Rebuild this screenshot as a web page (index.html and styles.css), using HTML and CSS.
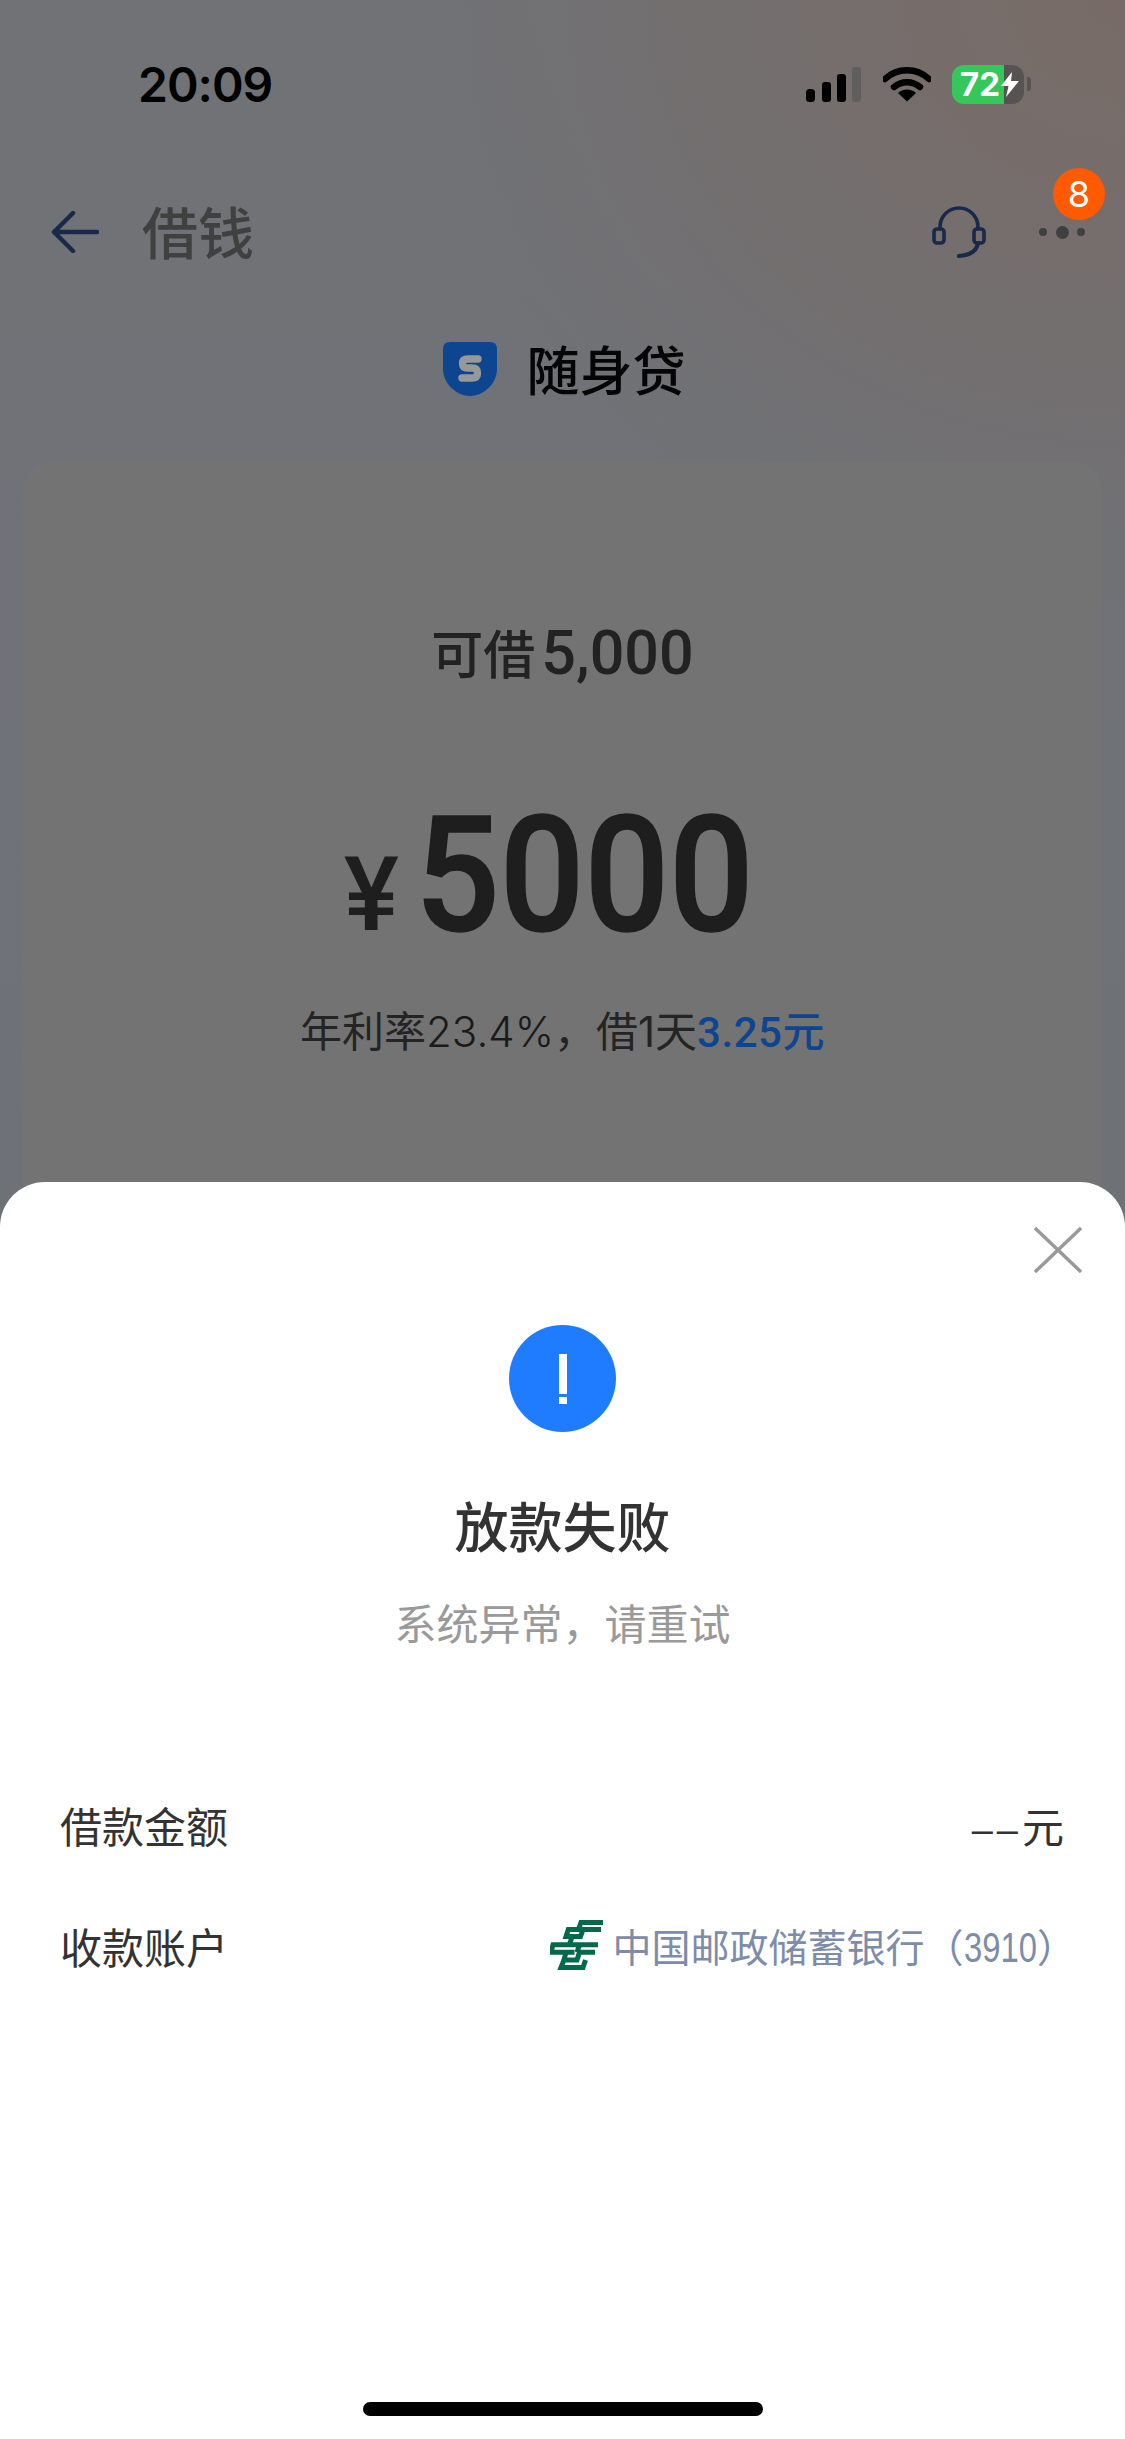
FILE: index.html
```html
<!DOCTYPE html>
<html lang="zh-CN">
<head>
<meta charset="utf-8">
<title>借钱</title>
<link rel="stylesheet" href="styles.css">
</head>
<body>
<main class="screen">
  <header class="status">
    <span class="clock">20:09</span>
    <div class="status-icons">
      <svg class="signal" width="55" height="35" viewBox="0 0 55 35">
        <rect x="0" y="22" width="9" height="13" rx="3.5" fill="#000"/>
        <rect x="16" y="15" width="9" height="20" rx="3" fill="#000"/>
        <rect x="31" y="7" width="9" height="28" rx="3" fill="#000"/>
        <rect x="46" y="0" width="9" height="35" rx="3" fill="#615f5e"/>
      </svg>
      <svg class="wifi" width="48" height="36" viewBox="0 0 48 36">
        <path d="M2 13 A32 32 0 0 1 46 13" fill="none" stroke="#000" stroke-width="6.5" stroke-linecap="round"/>
        <path d="M11 21 A20 20 0 0 1 37 21" fill="none" stroke="#000" stroke-width="6.5" stroke-linecap="round"/>
        <path d="M24 35.5 L15 27 A13 13 0 0 1 33 27 Z" fill="#000"/>
      </svg>
      <div class="battery">
        <div class="battery-body">
          <span class="battery-level">72</span>
          <svg class="bolt" width="18" height="25" viewBox="0 0 18 25"><path d="M11 0 L0 14 L7.5 14 L5 25 L18 9 L10 9 Z" fill="#fff"/></svg>
        </div>
        <span class="battery-nub"></span>
      </div>
    </div>
  </header>

  <nav class="topbar">
    <svg class="back" width="48" height="42" viewBox="0 0 48 42">
      <path d="M22 2 L3 21 L22 40 M3 21 H46" fill="none" stroke="#18294a" stroke-width="4.5" stroke-linecap="round" stroke-linejoin="round"/>
    </svg>
    <h1 class="page-title">借钱</h1>
    <svg class="headset" width="54" height="54" viewBox="0 0 54 54">
      <path d="M8 24 V22 A19 19 0 0 1 46 22 V24" fill="none" stroke="#18294a" stroke-width="3.6"/>
      <rect x="2" y="24" width="10" height="14" rx="3" fill="none" stroke="#18294a" stroke-width="3.6"/>
      <rect x="42" y="24" width="10" height="14" rx="3" fill="none" stroke="#18294a" stroke-width="3.6"/>
      <path d="M46 38 C45 46 38 50 27 51" fill="none" stroke="#18294a" stroke-width="4.2" stroke-linecap="round"/>
    </svg>
    <div class="more">
      <span class="dot"></span><span class="dot dot-mid"></span><span class="dot"></span>
      <span class="badge">8</span>
    </div>
  </nav>

  <div class="product">
    <svg class="shield" width="54" height="54" viewBox="0 0 54 54">
      <path d="M7 0 H47 Q54 0 54 7 V27 C54 42 40 54 27 54 C14 54 0 42 0 27 V7 Q0 0 7 0 Z" fill="#0e4590"/>
      <path d="M35 17 H25 Q19.5 17 19.5 21.5 Q19.5 26 25 26 H29 Q34.5 26 34.5 31 Q34.5 36 29 36 H19" fill="none" stroke="#96989a" stroke-width="7.4" stroke-linecap="round"/>
    </svg>
    <span class="product-name">随身贷</span>
  </div>

  <section class="loan-card">
    <p class="limit">可借<span class="limit-num">5,000</span></p>
    <p class="amount"><span class="yen">¥</span><span class="amount-num">5000</span></p>
    <p class="rate">年利率<span class="rate-light">23.4%</span>，借1天<span class="rate-cost">3.25元</span></p>
  </section>

  <section class="sheet">
    <svg class="close" width="48" height="46" viewBox="0 0 48 46">
      <path d="M1 1 L47 45 M47 1 L1 45" fill="none" stroke="#999" stroke-width="3.4"/>
    </svg>
    <div class="alert-icon"><span class="alert-bar"></span><span class="alert-dot"></span></div>
    <h2 class="result-title">放款失败</h2>
    <p class="result-sub">系统异常，请重试</p>
    <dl class="details">
      <div class="detail-row">
        <dt>借款金额</dt>
        <dd><span class="dashes">––</span>元</dd>
      </div>
      <div class="detail-row">
        <dt>收款账户</dt>
        <dd class="bank">
          <svg class="bank-logo" width="53" height="50" viewBox="0 0 53 50">
            <g fill="none" stroke="#04684a" stroke-width="5">
              <path d="M53 2.5H31L28.4 9.5H18.3L16 16.5H30.5L33 9.5H51"/>
              <path d="M22 16.5L19.6 24.8"/>
              <path d="M48 24.8H3L1 32.2H24.5"/>
              <path d="M45 32.2H29.5L27 40H14L11 47.5H33L35.5 40"/>
              <path d="M29.5 24.8L27 32.2M16 32.2L14 40"/>
            </g>
          </svg>
          <span class="bank-name">中国邮政储蓄银行（<span class="bank-tail">3910</span>）</span>
        </dd>
      </div>
    </dl>
    <span class="home-bar"></span>
  </section>
</main>
</body>
</html>
```

FILE: styles.css
```css
* { box-sizing: border-box; margin: 0; padding: 0; }

html, body { width: 1125px; height: 2439px; overflow: hidden; }

body {
  font-family: "Liberation Sans", "Noto Sans CJK SC", sans-serif;
}

.screen {
  position: relative;
  width: 1125px;
  height: 2439px;
  display: flex;
  flex-direction: column;
  background:
    radial-gradient(720px 620px at 100% 0, #786b66 0%, rgba(112, 114, 118, 0) 100%),
    linear-gradient(180deg, #707276 0%, #6c7177 100%);
  overflow: hidden;
}

/* Status bar */
.status {
  height: 64px;
  margin-top: 52px;
  padding: 0 94px 0 138px;
  display: flex;
  justify-content: space-between;
  align-items: center;
}
.clock {
  font-family: Inter, "Liberation Sans", sans-serif;
  font-size: 48px;
  font-weight: 600;
  letter-spacing: -1px;
  color: #000;
}
.status-icons { display: flex; align-items: center; }
.signal { margin-right: 22px; }
.wifi { margin-right: 21px; }
.battery { display: flex; align-items: center; gap: 3px; }
.battery-body {
  position: relative;
  width: 72px;
  height: 39px;
  border-radius: 12px;
  background: linear-gradient(90deg, #35c759 0 72%, #575352 72% 100%);
  display: flex;
  align-items: center;
}
.battery-level {
  margin-left: 8px;
  font-family: Inter, "Liberation Sans", sans-serif;
  font-size: 33px;
  font-weight: 700;
  color: #fff;
}
.bolt { margin-left: 1px; }
.battery-nub {
  width: 4px;
  height: 14px;
  border-radius: 0 3px 3px 0;
  background: #575352;
}

/* Top navigation */
.topbar {
  height: 100px;
  margin-top: 66px;
  padding-left: 51px;
  display: flex;
  align-items: center;
}
.page-title {
  margin-left: 43px;
  margin-bottom: 5px;
  font-family: "Noto Sans CJK SC", sans-serif;
  font-size: 56px;
  font-weight: 500;
  color: #404040;
  flex: 1;
}
.headset { margin-right: 53px; }
.more {
  position: relative;
  width: 46px;
  margin-right: 40px;
  display: flex;
  align-items: center;
  justify-content: space-between;
}
.dot { width: 8px; height: 8px; border-radius: 50%; background: #3f3f3f; }
.dot-mid { width: 13px; height: 13px; }
.badge {
  position: absolute;
  left: 14px;
  top: -58px;
  width: 52px;
  height: 52px;
  border-radius: 50%;
  background: #ff5a00;
  color: #fff;
  font-size: 36px;
  line-height: 52px;
  text-align: center;
  font-family: Inter, "Liberation Sans", sans-serif;
}

/* Product heading */
.product {
  margin-top: 60px;
  display: flex;
  justify-content: center;
  align-items: center;
  gap: 30px;
  height: 54px;
  padding-left: 3px;
}
.product-name {
  margin-bottom: 3px;
  font-family: "Noto Sans CJK SC", sans-serif;
  font-size: 53px;
  font-weight: 500;
  color: #050505;
}

/* Loan card */
.loan-card {
  margin: 65px 23px 0;
  height: 1000px;
  border-radius: 30px;
  background: #737373;
  display: flex;
  flex-direction: column;
  align-items: center;
  color: #1f1f1f;
}
.limit {
  margin-top: 154px;
  font-family: "Noto Sans CJK SC", sans-serif;
  font-size: 52px;
  font-weight: 500;
  line-height: 74px;
  color: #222;
}
.limit-num {
  margin-left: 6px;
  font-family: Roboto, sans-serif;
  font-size: 61px;
  font-weight: 500;
}
.amount {
  margin-top: 90px;
  padding-right: 27px;
  display: flex;
  align-items: baseline;
  line-height: 190px;
  font-family: Roboto, sans-serif;
  font-weight: 500;
  color: #1e1e1e;
}
.yen { font-size: 104px; margin-right: 16px; }
.amount-num {
  font-size: 162px;
  display: inline-block;
  -webkit-text-stroke: 1.5px #1e1e1e;
  transform: scaleX(0.92);
  transform-origin: left center;
  margin-right: -29px;
}
.rate {
  margin-top: 14px;
  font-family: Inter, "Noto Sans CJK SC", sans-serif;
  font-size: 42px;
  line-height: 56px;
  color: #242424;
}
.rate-light { font-weight: 300; color: #1a1a1a; }
.rate-cost {
  font-family: Roboto, "Noto Sans CJK SC", sans-serif;
  letter-spacing: 0.5px;
  color: #0e4590;
  font-weight: 500;
}

/* Result sheet */
.sheet {
  position: absolute;
  left: 0;
  right: 0;
  top: 1182px;
  bottom: 0;
  border-radius: 45px 45px 0 0;
  background: #fff;
  display: flex;
  flex-direction: column;
  align-items: center;
}
.close {
  position: absolute;
  top: 45px;
  right: 43px;
}
.alert-icon {
  margin-top: 143px;
  width: 107px;
  height: 107px;
  border-radius: 50%;
  background: #1f7cff;
  display: flex;
  flex-direction: column;
  align-items: center;
  padding-top: 29px;
  gap: 3px;
}
.alert-bar { width: 8px; height: 40px; background: #fff; }
.alert-dot { width: 8px; height: 7px; background: #fff; }
.result-title {
  margin-top: 55px;
  font-family: "Noto Sans CJK SC", sans-serif;
  font-size: 54px;
  font-weight: 500;
  line-height: 76px;
  color: #333;
}
.result-sub {
  margin-top: 29px;
  font-family: "Noto Sans CJK SC", sans-serif;
  font-size: 42px;
  line-height: 60px;
  color: #999;
}
.details {
  align-self: stretch;
  margin-top: 142px;
  padding: 0 61px 0 60px;
  display: flex;
  flex-direction: column;
  gap: 61px;
}
.detail-row {
  display: flex;
  justify-content: space-between;
  align-items: center;
  height: 60px;
  font-family: "Liberation Sans", "Noto Sans CJK SC", sans-serif;
  font-size: 42px;
  color: #333;
}
.dashes {
  font-size: 38px;
  letter-spacing: 4px;
}
.bank {
  display: flex;
  align-items: center;
  margin-right: -12px;
  font-size: 39px;
  color: #7d8ca8;
}
.bank-logo { margin-right: 10px; }
.bank-tail {
  display: inline-block;
  font-size: 42px;
  transform: scaleX(0.78);
  transform-origin: left center;
  margin-right: -20px;
}
.home-bar {
  position: absolute;
  left: 363px;
  bottom: 23px;
  width: 400px;
  height: 14px;
  border-radius: 7px;
  background: #000;
}
```
